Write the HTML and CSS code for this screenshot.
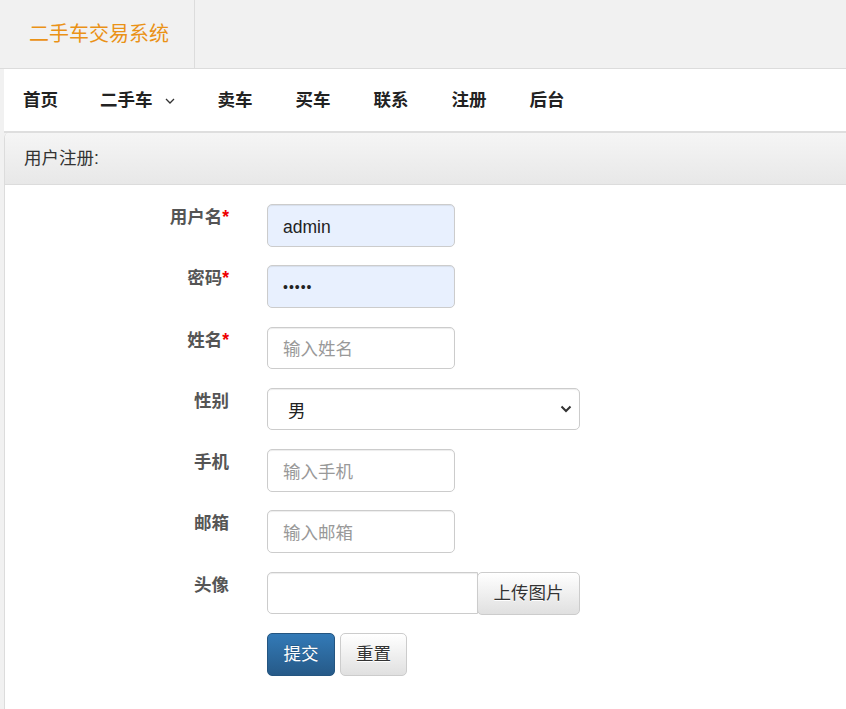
FILE: index.html
```html
<!DOCTYPE html>
<html lang="zh-CN">
<head>
<meta charset="utf-8">
<title>用户注册</title>
<link rel="stylesheet" href="styles.css">
</head>
<body>
<header class="topbar">
  <div class="brand">二手车交易系统</div>
</header>
<div class="main">
  <nav class="nav">
    <a class="nav-item">首页</a>
    <a class="nav-item">二手车<svg class="caret" width="10" height="6" viewBox="0 0 10 6"><path d="M1 1l4 4 4-4" fill="none" stroke="#333" stroke-width="1.3"/></svg></a>
    <a class="nav-item">卖车</a>
    <a class="nav-item">买车</a>
    <a class="nav-item">联系</a>
    <a class="nav-item">注册</a>
    <a class="nav-item">后台</a>
  </nav>
  <section class="panel">
    <div class="panel-heading">用户注册:</div>
    <div class="panel-body">
      <form class="form">
        <div class="row">
          <label class="label">用户名<span class="req">*</span></label>
          <div class="field"><input class="input short filled" type="text" value="admin"></div>
        </div>
        <div class="row">
          <label class="label">密码<span class="req">*</span></label>
          <div class="field"><input class="input short filled" type="password" value="admin"></div>
        </div>
        <div class="row">
          <label class="label">姓名<span class="req">*</span></label>
          <div class="field"><input class="input short" type="text" placeholder="输入姓名"></div>
        </div>
        <div class="row">
          <label class="label">性别</label>
          <div class="field"><select class="input long select"><option>男</option><option>女</option></select></div>
        </div>
        <div class="row">
          <label class="label">手机</label>
          <div class="field"><input class="input short" type="text" placeholder="输入手机"></div>
        </div>
        <div class="row">
          <label class="label">邮箱</label>
          <div class="field"><input class="input short" type="text" placeholder="输入邮箱"></div>
        </div>
        <div class="row">
          <label class="label">头像</label>
          <div class="field">
            <div class="input-group">
              <input class="input group-input" type="text">
              <button class="btn btn-default group-btn" type="button">上传图片</button>
            </div>
          </div>
        </div>
        <div class="row">
          <div class="label"></div>
          <div class="field actions">
            <button class="btn btn-primary" type="button">提交</button>
            <button class="btn btn-default" type="button">重置</button>
          </div>
        </div>
      </form>
    </div>
  </section>
</div>
</body>
</html>
```

FILE: styles.css
```css
* { box-sizing: border-box; }
html, body { margin: 0; padding: 0; }
body {
  background: #f1f1f1;
  font-family: "Liberation Sans", "Noto Sans CJK SC", sans-serif;
  font-size: 17.5px;
  line-height: 25px;
  color: #333;
  width: 846px;
  overflow: hidden;
}
.topbar {
  height: 69px;
  border-bottom: 1px solid #dcdcdc;
  display: flex;
}
.brand {
  width: 195px;
  border-right: 1px solid #dcdcdc;
  padding-left: 29px;
  font-size: 20px;
  line-height: 68px;
  color: #ea9217;
}
.main {
  margin-left: 4px;
}
.nav {
  background: #fff;
  height: 64px;
  border-bottom: 2px solid #dedede;
  display: flex;
  align-items: center;
  padding-left: 0;
}
.nav-item {
  display: flex;
  align-items: center;
  font-weight: bold;
  color: #222;
  padding: 0 21.5px;
  font-size: 17.5px;
}
.nav-item:first-child { padding-left: 19px; padding-right: 20.5px; }
.caret { margin-left: 12px; margin-top: 1px; }
.panel {
  background: #fff;
  border-left: 1px solid #dcdcdc;
  border-top-left-radius: 5px;
  min-height: 580px;
}
.panel-heading {
  height: 52px;
  padding: 13px 19px;
  border-bottom: 1px solid #dcdcdc;
  background: linear-gradient(to bottom, #f5f5f5, #e8e8e8);
  color: #333;
  font-size: 17.5px;
  border-top-left-radius: 5px;
}
.panel-body {
  padding-top: 19px;
}
.row {
  display: flex;
  margin-bottom: 18.75px;
}
.label {
  width: 243px;
  padding-right: 19px;
  padding-top: 1px;
  text-align: right;
  font-weight: bold;
  color: #555;
}
.req { color: #e00; }
.field {
  padding-left: 19px;
}
.input {
  display: block;
  height: 42.5px;
  border: 1px solid #ccc;
  border-radius: 5px;
  padding: 9.5px 15px 5.5px;
  font-family: "Liberation Sans", "Noto Sans CJK SC", sans-serif;
  font-size: 17.5px;
  color: #222;
  background: #fff;
  box-shadow: inset 0 1px 1px rgba(0,0,0,.075);
}
.input::placeholder { color: #999; }
.short { width: 188px; }
.long { width: 313px; }
.filled { background: #e8f0fe; }
input[type=password].filled { letter-spacing: 1px; font-size: 14px; padding-top: 7.5px; padding-bottom: 7.5px; }
.select {
  appearance: none;
  -webkit-appearance: none;
  background: #fff url("data:image/svg+xml;utf8,<svg xmlns='http://www.w3.org/2000/svg' width='12' height='8' viewBox='0 0 12 8'><path d='M1.5 1.5l4.5 4.5 4.5-4.5' fill='none' stroke='%23333' stroke-width='2'/></svg>") no-repeat right 7px center;
  padding-left: 20px;
}
.input-group {
  display: flex;
  width: 313px;
}
.group-input {
  flex: 1;
  width: 0;
  border-radius: 5px 0 0 5px;
}
.group-btn {
  flex: 0 0 103px;
  border-radius: 0 5px 5px 0;
  margin-left: -1px;
}
.btn {
  height: 43px;
  padding: 7.5px 15px;
  border: 1px solid #ccc;
  border-radius: 5px;
  font-family: "Liberation Sans", "Noto Sans CJK SC", sans-serif;
  font-size: 17.5px;
  line-height: 25px;
  cursor: pointer;
}
.btn-default {
  background: linear-gradient(to bottom, #fff, #e0e0e0);
  color: #333;
  text-shadow: 0 1px 0 #fff;
}
.btn-primary {
  width: 68px;
  background: linear-gradient(to bottom, #337ab7, #265a88);
  border-color: #245580;
  color: #fff;
  text-shadow: 0 -1px 0 rgba(0,0,0,.2);
}
.actions {
  display: flex;
  gap: 5px;
}
```
